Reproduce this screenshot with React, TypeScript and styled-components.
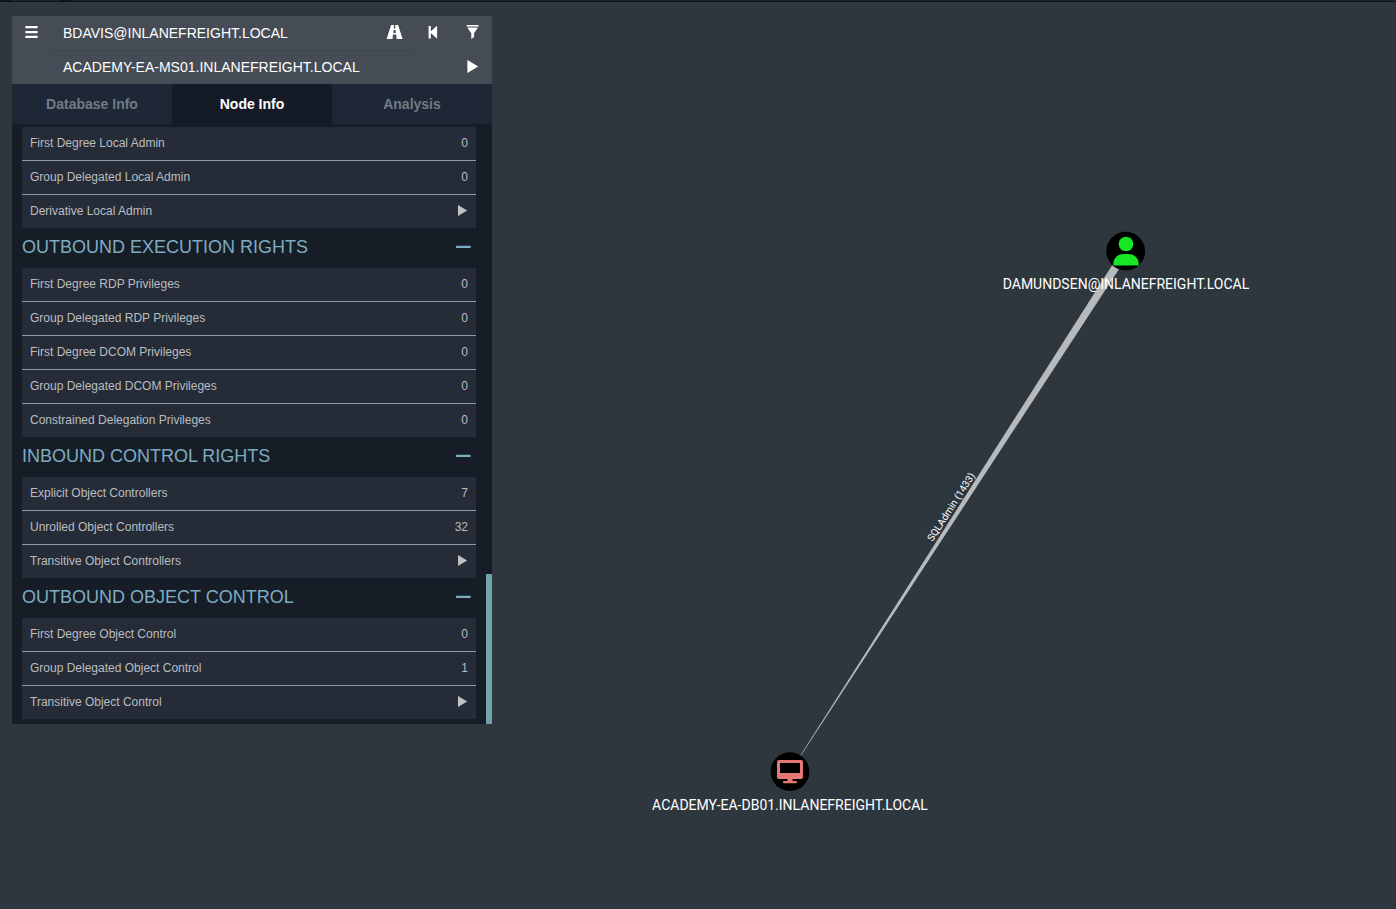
import React from "react";
import styled, { createGlobalStyle } from "styled-components";

const Global = createGlobalStyle`
  * { box-sizing: border-box; }
  html, body { margin: 0; height: 100%; }
  body {
    background: #2f373e;
    font-family: "Liberation Sans", Arial, sans-serif;
    overflow: hidden;
  }
`;

const Page = styled.div`
  position: relative;
  width: 1396px;
  height: 909px;
  background: #2f373e;
`;

const WindowEdge = styled.div`
  height: 2px;
  border-bottom: 1px solid #0e1218;
  background: linear-gradient(
    90deg,
    #12161c 12px,
    #20262e 12px 59px,
    #12161c 59px 72px,
    #20262e 72px
  );
`;

const Workspace = styled.main`
  padding: 14px 12px;
`;

const Graph = styled.svg`
  position: absolute;
  left: 0;
  top: 0;
  font-family: Roboto, sans-serif;
`;

const Panel = styled.section`
  position: relative;
  width: 480px;
  height: 708px;
  background: #161d27;
`;

const Header = styled.header`
  height: 68px;
  background: #464c55;
`;

const SearchRow = styled.div`
  display: flex;
  align-items: center;
  height: 34px;
  color: #fff;
  font-size: 14px;
`;

const IconButton = styled.button`
  display: flex;
  align-items: center;
  justify-content: center;
  flex: none;
  width: 39px;
  height: 34px;
  padding: 0 1px 2px 0;
  border: 0;
  background: none;
  color: #fff;

  svg {
    overflow: visible;
  }

  path {
    transform: translate(0.6px, 0.1px);
  }
`;

const SearchField = styled.div<{ $divided?: boolean }>`
  flex: 1;
  height: 34px;
  padding-left: 12px;
  line-height: 34px;
  background: ${(p) =>
    p.$divided
      ? "linear-gradient(#40464e, #40464e) 0 0 / 363px 1px no-repeat"
      : "none"};
`;

const Tabs = styled.nav`
  display: flex;
  height: 40px;
`;

const Tab = styled.div<{ $active?: boolean }>`
  flex: 1;
  text-align: center;
  font-size: 14px;
  font-weight: bold;
  line-height: 40px;
  color: ${(p) => (p.$active ? "#fff" : "#737a84")};
  background: ${(p) => (p.$active ? "#151b26" : "#1e2735")};
`;

const Body = styled.div`
  padding: 3px 16px 5px 10px;
`;

const SectionTitle = styled.h4`
  display: flex;
  align-items: center;
  justify-content: space-between;
  height: 40px;
  margin: 0;
  padding: 0 5px 2px 0;
  color: #7dacc1;
  font-size: 18px;
  font-weight: normal;
`;

const Row = styled.div`
  display: flex;
  align-items: center;
  justify-content: space-between;
  height: 34px;
  padding: 0 8px;
  background: #252c37;
  border-bottom: 1px solid #92989b;
  color: #bbbdc0;
  font-size: 12px;
  line-height: 33px;

  &:last-child {
    height: 33px;
    border-bottom: 0;
  }
`;

const PlayGlyph = styled.svg`
  margin-bottom: 1px;
`;

const ScrollThumb = styled.div`
  position: absolute;
  right: 0;
  bottom: 0;
  width: 6px;
  height: 150px;
  background: #73a3aa;
`;

const PlayIcon = () => (
  <PlayGlyph width="11" height="12" viewBox="0 0 11 12">
    <path d="M1 0 10.200 5.500 1 11Z" fill="#bfc1c3" />
  </PlayGlyph>
);

const CollapseIcon = () => (
  <svg width="15" height="4" viewBox="0 0 15 4">
    <rect x="0" y="0.700" width="14.600" height="2.400" rx="0.600" fill="#7dacc1" />
  </svg>
);

type Item = [string, string | null];

const sections: { title?: string; items: Item[] }[] = [
  {
    items: [
      ["First Degree Local Admin", "0"],
      ["Group Delegated Local Admin", "0"],
      ["Derivative Local Admin", null],
    ],
  },
  {
    title: "OUTBOUND EXECUTION RIGHTS",
    items: [
      ["First Degree RDP Privileges", "0"],
      ["Group Delegated RDP Privileges", "0"],
      ["First Degree DCOM Privileges", "0"],
      ["Group Delegated DCOM Privileges", "0"],
      ["Constrained Delegation Privileges", "0"],
    ],
  },
  {
    title: "INBOUND CONTROL RIGHTS",
    items: [
      ["Explicit Object Controllers", "7"],
      ["Unrolled Object Controllers", "32"],
      ["Transitive Object Controllers", null],
    ],
  },
  {
    title: "OUTBOUND OBJECT CONTROL",
    items: [
      ["First Degree Object Control", "0"],
      ["Group Delegated Object Control", "1"],
      ["Transitive Object Control", null],
    ],
  },
];

export default function App() {
  return (
    <>
      <Global />
      <Page>
        <WindowEdge />
        <Graph width="1396" height="909" viewBox="0 0 1396 909">
          <path d="M1122.600 248.800 1129.400 253.200 790.100 772.100 789.900 771.900Z" fill="#b7babc" />
          <text
            transform="translate(953.9 508.8) rotate(-57.2)"
            textAnchor="middle"
            fontSize="10"
            fill="#fff"
          >
            SQLAdmin (1433)
          </text>
          <circle cx="1125.7" cy="251.2" r="19.4" fill="#000" />
          <circle cx="1126" cy="244" r="7.3" fill="#17e625" />
          <path
            d="M1113.3 265.5v-1.6a10 10 0 0 1 10-10h5.4a10 10 0 0 1 10 10v1.6Z"
            fill="#17e625"
          />
          <text x="1126" y="289" textAnchor="middle" fontSize="14" fill="#fff">
            DAMUNDSEN@INLANEFREIGHT.LOCAL
          </text>
          <circle cx="790" cy="771.7" r="19.4" fill="#000" />
          <path
            fillRule="evenodd"
            d="M779 760h22a2 2 0 0 1 2 2v15a2 2 0 0 1-2 2h-8.500v2h3.500a1 1 0 0 1 0 2.200h-12a1 1 0 0 1 0-2.200h3.500v-2h-8.500a2 2 0 0 1-2-2v-15a2 2 0 0 1 2-2Zm1 3v10h20v-10Z"
            fill="#e67874"
          />
          <text x="790" y="810" textAnchor="middle" fontSize="14" fill="#fff">
            ACADEMY-EA-DB01.INLANEFREIGHT.LOCAL
          </text>
        </Graph>
        <Workspace>
          <Panel>
            <Header>
              <SearchRow>
                <IconButton aria-label="Menu">
                  <svg width="12" height="14" viewBox="0 0 12 14">
                    <path
                      d="M-.2.800h12.200v2.300H-.2zM-.2 5.800h12.200v2.300H-.2zM-.2 10.700h12.200v2.300H-.2z"
                      fill="currentColor"
                    />
                  </svg>
                </IconButton>
                <SearchField>BDAVIS@INLANEFREIGHT.LOCAL</SearchField>
                <IconButton aria-label="Pathfinding">
                  <svg width="16" height="14" viewBox="0 0 16 14">
                    <path
                      fillRule="evenodd"
                      d="M4.500 0h7L16 14H10L9.700 9.500H6.300L6 14H0ZM7.300 0v3.500h1.400V0ZM7 5l-.2 2.800h2.400L9 5Z"
                      fill="currentColor"
                    />
                  </svg>
                </IconButton>
                <IconButton aria-label="Back">
                  <svg width="10" height="14" viewBox="0 0 10 14">
                    <path d="M0 1h2.200v5.200L8.500.7v12.900L2.200 8v5.300H0Z" fill="currentColor" />
                  </svg>
                </IconButton>
                <IconButton aria-label="Filter">
                  <svg width="12" height="14" viewBox="0 0 12 14">
                    <path
                      d="M0 0h12v1.300H0zM.7 2.400h10.600L7.500 8.200v3.800L4.700 14V8.200Z"
                      fill="currentColor"
                    />
                  </svg>
                </IconButton>
              </SearchRow>
              <SearchRow>
                <IconButton as="span" />
                <SearchField $divided>ACADEMY-EA-MS01.INLANEFREIGHT.LOCAL</SearchField>
                <IconButton aria-label="Find path">
                  <svg width="12" height="14" viewBox="0 0 12 14">
                    <path d="M.8.900 11.600 7.300.8 13.800Z" fill="currentColor" />
                  </svg>
                </IconButton>
              </SearchRow>
            </Header>
            <Tabs>
              <Tab>Database Info</Tab>
              <Tab $active>Node Info</Tab>
              <Tab>Analysis</Tab>
            </Tabs>
            <Body>
              {sections.map((s, i) => (
                <React.Fragment key={i}>
                  {s.title && (
                    <SectionTitle>
                      {s.title}
                      <CollapseIcon />
                    </SectionTitle>
                  )}
                  <div>
                    {s.items.map(([label, value]) => (
                      <Row key={label}>
                        <span>{label}</span>
                        {value ?? <PlayIcon />}
                      </Row>
                    ))}
                  </div>
                </React.Fragment>
              ))}
            </Body>
            <ScrollThumb />
          </Panel>
        </Workspace>
      </Page>
    </>
  );
}
